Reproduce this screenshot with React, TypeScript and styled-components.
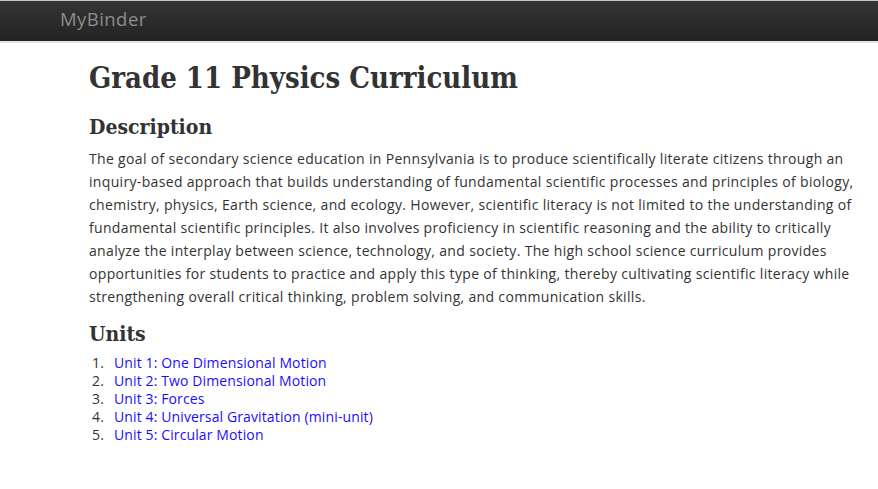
import React from "react";
import styled, { createGlobalStyle } from "styled-components";

const Global = createGlobalStyle`
  html, body { margin: 0; padding: 0; background: #fff; }
  body { font-family: "Open Sans", "Liberation Sans", sans-serif; color: #333; }
`;

const Navbar = styled.header`
  height: 40px;
  background: linear-gradient(to bottom, #353535, #222);
  border-top: 1px solid #c8c8c8;
  border-bottom: 2px solid #e4e4e4;
  display: flex;
  align-items: center;
  padding-left: 60px;
`;

const Brand = styled.a`
  font-family: "Open Sans", sans-serif;
  font-size: 18.5px;
  font-weight: 400;
  letter-spacing: 0.45px;
  color: #8c8c8c;
  text-decoration: none;
  margin-top: -5px;
`;

const Main = styled.main`
  padding: 0 14px 0 89px;
`;

const Title = styled.h1`
  font-family: "DejaVu Serif", serif;
  font-stretch: condensed;
  font-weight: 700;
  font-size: 29px;
  line-height: 36px;
  margin: 17px 0 0;
  color: #333;
`;

const Heading = styled.h2<{ $top: number }>`
  font-family: "DejaVu Serif", serif;
  font-stretch: condensed;
  font-weight: 700;
  font-size: 21px;
  line-height: 26px;
  margin: ${(p) => p.$top}px 0 7px;
  color: #333;
`;

const Paragraph = styled.p`
  font-size: 14px;
  line-height: 23px;
  letter-spacing: 0.33px;
  margin: 0;
`;

const UnitList = styled.ol`
  margin: 6px 0 0;
  padding: 0;
  list-style: none;
  counter-reset: unit;
  font-size: 14px;
  line-height: 18px;
  letter-spacing: 0.12px;
`;

const UnitItem = styled.li`
  counter-increment: unit;
  &::before {
    content: counter(unit) ".";
    display: inline-block;
    width: 22px;
    padding-left: 3px;
    color: #333;
  }
`;

const UnitLink = styled.a`
  color: #1a0dff;
  text-decoration: none;
`;

const units = [
  "Unit 1: One Dimensional Motion",
  "Unit 2: Two Dimensional Motion",
  "Unit 3: Forces",
  "Unit 4: Universal Gravitation (mini-unit)",
  "Unit 5: Circular Motion",
];

export default function App() {
  return (
    <>
      <Global />
      <Navbar>
        <Brand href="#">MyBinder</Brand>
      </Navbar>
      <Main>
        <Title>Grade 11 Physics Curriculum</Title>
        <Heading $top={18}>Description</Heading>
        <Paragraph>
          The goal of secondary science education in Pennsylvania is to produce scientifically literate citizens
          through an inquiry-based approach that builds understanding of fundamental scientific processes and
          principles of biology, chemistry, physics, Earth science, and ecology. However, scientific literacy is not
          limited to the understanding of fundamental scientific principles. It also involves proficiency in
          scientific reasoning and the ability to critically analyze the interplay between science, technology, and
          society. The high school science curriculum provides opportunities for students to practice and apply this
          type of thinking, thereby cultivating scientific literacy while strengthening overall critical thinking,
          problem solving, and communication skills.
        </Paragraph>
        <Heading $top={13}>Units</Heading>
        <UnitList>
          {units.map((u) => (
            <UnitItem key={u}>
              <UnitLink href="#">{u}</UnitLink>
            </UnitItem>
          ))}
        </UnitList>
      </Main>
    </>
  );
}
